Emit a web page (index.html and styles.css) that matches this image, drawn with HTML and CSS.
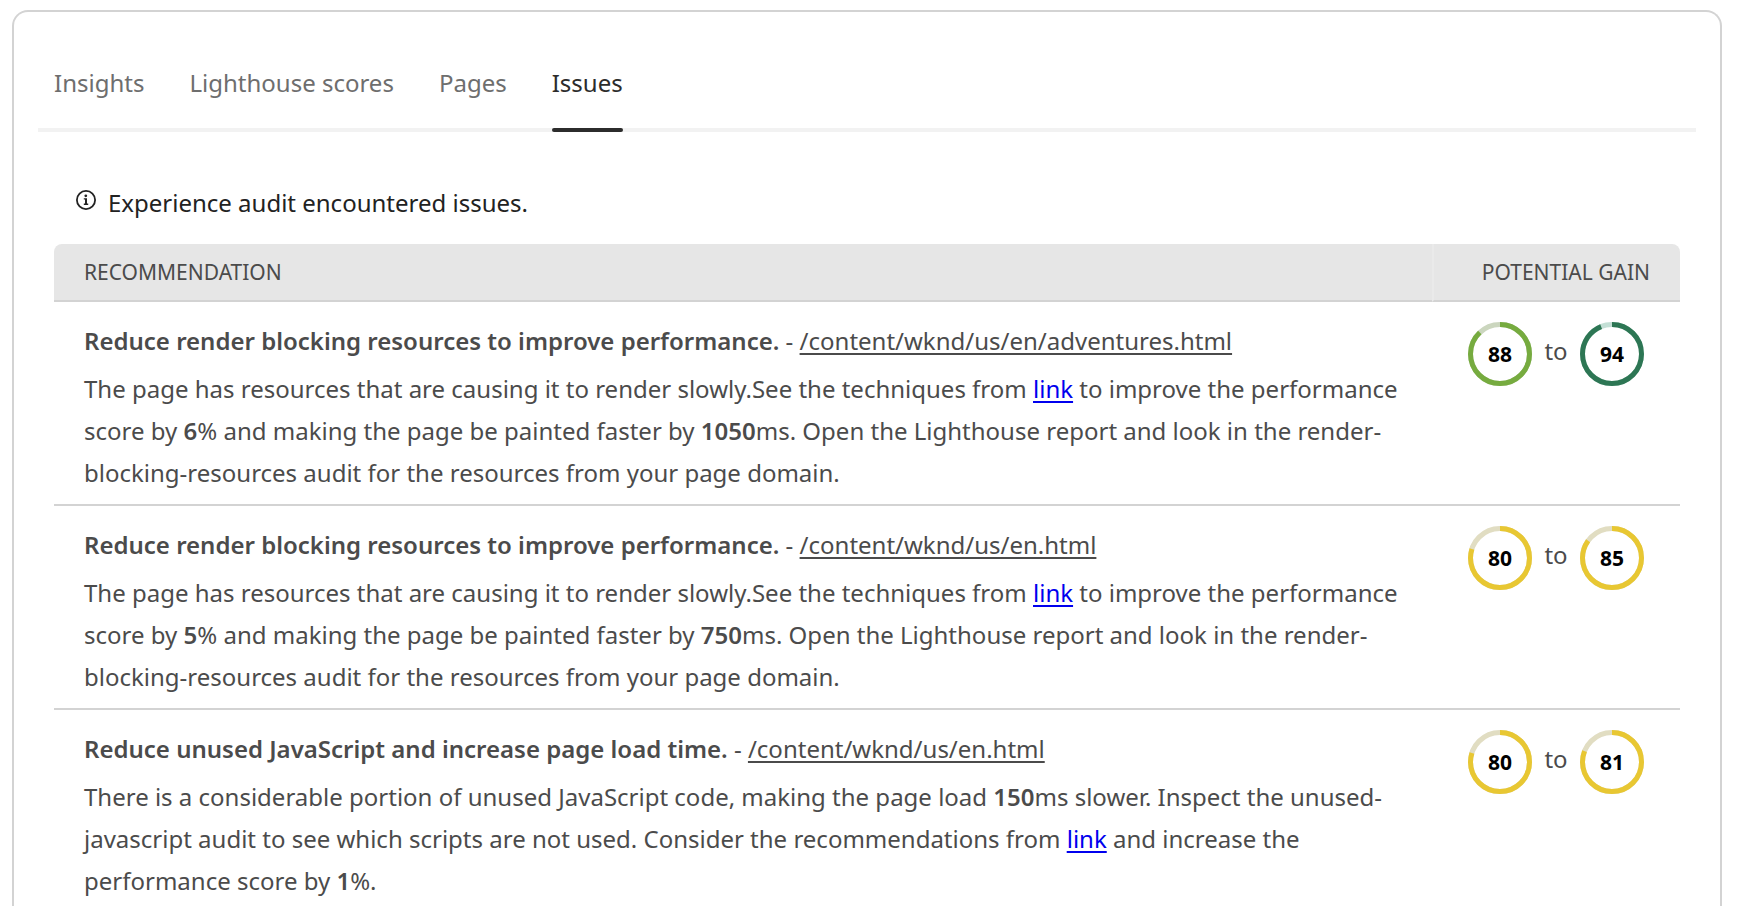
FILE: index.html
```html
<!DOCTYPE html>
<html lang="en">
<head>
<meta charset="utf-8">
<meta name="viewport" content="width=device-width, initial-scale=1">
<title>Experience audit</title>
<link rel="stylesheet" href="styles.css">
</head>
<body>
<main class="panel">
  <div class="tabs" role="tablist">
    <button class="tab" type="button" role="tab" aria-selected="false">Insights</button>
    <button class="tab" type="button" role="tab" aria-selected="false">Lighthouse scores</button>
    <button class="tab" type="button" role="tab" aria-selected="false">Pages</button>
    <button class="tab tab-active" type="button" role="tab" aria-selected="true">Issues</button>
  </div>
  <section class="issues" role="tabpanel">
    <p class="notice">
      <svg class="notice-icon" viewBox="0 0 20 20" aria-hidden="true">
        <circle cx="10" cy="10" r="9.1" fill="none" stroke="currentColor" stroke-width="1.8"/>
        <circle cx="9.8" cy="5.8" r="1.4" fill="currentColor"/>
        <path d="M7.8 8.2H11v5.4h1.2V15H7.8v-1.4H9V9.6H7.8z" fill="currentColor"/>
      </svg>
      <span>Experience audit encountered issues.</span>
    </p>
    <table class="table">
      <colgroup><col><col class="col-gain"></colgroup>
      <thead>
        <tr><th scope="col">RECOMMENDATION</th><th scope="col" class="head-gain">POTENTIAL GAIN</th></tr>
      </thead>
      <tbody>
        <tr>
          <td class="rec">
            <p class="rec-title"><strong>Reduce render blocking resources to improve performance.</strong> - <a class="page-link" href="#">/content/wknd/us/en/adventures.html</a></p>
            <p>The page has resources that are causing it to render slowly.See the techniques from <a class="doc-link" href="#">link</a> to improve the performance score by <strong>6</strong>% and making the page be painted faster by <strong>1050</strong>ms. Open the Lighthouse report and look in the render-blocking-resources audit for the resources from your page domain.</p>
          </td>
          <td class="gain"><div class="scores">
            <span class="score good"><svg class="ring" viewBox="0 0 64 64" aria-hidden="true"><circle class="track" cx="32" cy="32" r="29.5"/><circle class="arc" cx="32" cy="32" r="29.5" pathLength="100" stroke-dasharray="88 12"/></svg><span class="value">88</span></span>
            <span class="to">to</span>
            <span class="score great"><svg class="ring" viewBox="0 0 64 64" aria-hidden="true"><circle class="track" cx="32" cy="32" r="29.5"/><circle class="arc" cx="32" cy="32" r="29.5" pathLength="100" stroke-dasharray="94 6"/></svg><span class="value">94</span></span>
          </div></td>
        </tr>
        <tr>
          <td class="rec">
            <p class="rec-title"><strong>Reduce render blocking resources to improve performance.</strong> - <a class="page-link" href="#">/content/wknd/us/en.html</a></p>
            <p>The page has resources that are causing it to render slowly.See the techniques from <a class="doc-link" href="#">link</a> to improve the performance score by <strong>5</strong>% and making the page be painted faster by <strong>750</strong>ms. Open the Lighthouse report and look in the render-blocking-resources audit for the resources from your page domain.</p>
          </td>
          <td class="gain"><div class="scores">
            <span class="score fair"><svg class="ring" viewBox="0 0 64 64" aria-hidden="true"><circle class="track" cx="32" cy="32" r="29.5"/><circle class="arc" cx="32" cy="32" r="29.5" pathLength="100" stroke-dasharray="80 20"/></svg><span class="value">80</span></span>
            <span class="to">to</span>
            <span class="score fair"><svg class="ring" viewBox="0 0 64 64" aria-hidden="true"><circle class="track" cx="32" cy="32" r="29.5"/><circle class="arc" cx="32" cy="32" r="29.5" pathLength="100" stroke-dasharray="85 15"/></svg><span class="value">85</span></span>
          </div></td>
        </tr>
        <tr>
          <td class="rec">
            <p class="rec-title"><strong>Reduce unused JavaScript and increase page load time.</strong> - <a class="page-link" href="#">/content/wknd/us/en.html</a></p>
            <p>There is a considerable portion of unused JavaScript code, making the page load <strong>150</strong>ms slower. Inspect the unused-javascript audit to see which scripts are not used. Consider the recommendations from <a class="doc-link" href="#">link</a> and increase the performance score by <strong>1</strong>%.</p>
          </td>
          <td class="gain"><div class="scores">
            <span class="score fair"><svg class="ring" viewBox="0 0 64 64" aria-hidden="true"><circle class="track" cx="32" cy="32" r="29.5"/><circle class="arc" cx="32" cy="32" r="29.5" pathLength="100" stroke-dasharray="80 20"/></svg><span class="value">80</span></span>
            <span class="to">to</span>
            <span class="score fair"><svg class="ring" viewBox="0 0 64 64" aria-hidden="true"><circle class="track" cx="32" cy="32" r="29.5"/><circle class="arc" cx="32" cy="32" r="29.5" pathLength="100" stroke-dasharray="81 19"/></svg><span class="value">81</span></span>
          </div></td>
        </tr>
      </tbody>
    </table>
  </section>
</main>
</body>
</html>
```
FILE: styles.css
```css
* { box-sizing: border-box; }

html { scrollbar-width: none; }

body {
  margin: 0;
  background: #fff;
  color: #4b4b4b;
  font-family: "Noto Sans", "Liberation Sans", sans-serif;
  font-size: 24px;
  line-height: 42px;
}

p { margin: 0; }

strong { font-weight: 600; }

.panel {
  margin: 10px 28px 0 12px;
  padding: 50px 24px 24px;
  border: 2px solid #d3d3d3;
  border-bottom: 0;
  border-radius: 16px 16px 0 0;
}

.tabs {
  display: flex;
  gap: 45px;
  padding: 0 16px;
  box-shadow: inset 0 -4px #f2f2f2;
}

.tab {
  position: relative;
  padding: 0 0 28px;
  border: 0;
  background: none;
  color: #6e6e6e;
  font: inherit;
  cursor: pointer;
}

.tab-active { color: #2c2c2c; }

.tab-active::after {
  content: "";
  position: absolute;
  right: 0;
  bottom: 0;
  left: 0;
  height: 4px;
  border-radius: 2px;
  background: #2c2c2c;
}

.issues { padding: 50px 16px 0; }

.notice {
  display: flex;
  gap: 12px;
  padding-left: 22px;
  color: #222;
}

.notice-icon {
  flex: none;
  width: 20px;
  height: 20px;
  margin-top: 8px;
}

.table {
  width: 100%;
  margin-top: 20px;
  border-spacing: 0;
  table-layout: fixed;
}

.col-gain { width: 248px; }

th {
  height: 58px;
  padding: 0 30px;
  border-bottom: 2px solid #d3d3d3;
  background: #e6e6e6;
  font-size: 21px;
  font-weight: 400;
  text-align: left;
}

th:first-child { border-top-left-radius: 8px; }

.head-gain {
  border-left: 2px solid #eaeaea;
  border-top-right-radius: 8px;
  text-align: right;
}

td {
  padding: 0;
  border-bottom: 2px solid #d3d3d3;
  vertical-align: top;
}

.rec { padding: 18px 30px 10px; }

.rec-title { margin-bottom: 6px; }

.page-link,
.doc-link {
  text-decoration-thickness: 2px;
  text-underline-offset: 3px;
}

.page-link { color: inherit; }

.doc-link { color: #0000ee; }

.gain { padding: 20px 36px 0 0; }

.scores {
  display: flex;
  justify-content: flex-end;
  gap: 12px;
}

.score {
  display: grid;
  width: 64px;
  height: 64px;
  place-items: center;
}

.ring,
.value { grid-area: 1 / 1; }

.ring {
  width: 64px;
  height: 64px;
  transform: rotate(-90deg);
}

.track,
.arc {
  fill: none;
  stroke-width: 5;
}

.good .track { stroke: #cbd6be; }
.good .arc { stroke: #76ab3f; }
.great .track { stroke: #c3dfd5; }
.great .arc { stroke: #2d7654; }
.fair .track { stroke: #e1ddc2; }
.fair .arc { stroke: #e8c732; }

.value {
  color: #000;
  font-size: 21px;
  font-weight: 700;
}

.to {
  width: 24px;
  padding-top: 8px;
  text-align: center;
}
```
